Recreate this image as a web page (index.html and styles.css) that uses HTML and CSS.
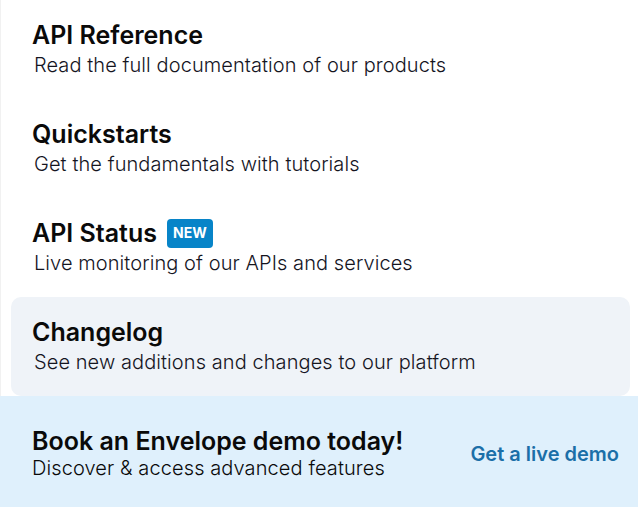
FILE: index.html
```html
<!DOCTYPE html>
<html>
<head>
<meta charset="utf-8">
<link rel="stylesheet" href="styles.css">
</head>
<body>
<div class="menu">
  <ul class="list">
    <li class="item">
      <div class="title">API Reference</div>
      <div class="desc">Read the full documentation of our products</div>
    </li>
    <li class="item">
      <div class="title">Quickstarts</div>
      <div class="desc">Get the fundamentals with tutorials</div>
    </li>
    <li class="item">
      <div class="title">API Status <span class="badge">NEW</span></div>
      <div class="desc">Live monitoring of our APIs and services</div>
    </li>
    <li class="item active">
      <div class="title">Changelog</div>
      <div class="desc">See new additions and changes to our platform</div>
    </li>
  </ul>
  <div class="promo">
    <div class="promo-text">
      <div class="promo-title">Book an Envelope demo today!</div>
      <div class="promo-desc">Discover &amp; access advanced features</div>
    </div>
    <a class="promo-link" href="#">Get a live demo</a>
  </div>
</div>
</body>
</html>
```
FILE: styles.css
```css
html, body {
  margin: 0;
  padding: 0;
  background: #ffffff;
}
body {
  font-family: Inter, "Noto Sans", sans-serif;
  color: #0b0b0f;
}
.menu {
  width: 640px;
  height: 507px;
  border-left: 1px solid #f1f1f1;
  box-sizing: border-box;
  display: flex;
  flex-direction: column;
}
.list {
  list-style: none;
  margin: 0;
  padding: 0 10px 0 10px;
  display: flex;
  flex-direction: column;
}
.item {
  height: 99px;
  box-sizing: border-box;
  padding: 20px 21px 0 21px;
  border-radius: 10px;
}
.item.active {
  background: #eff3f8;
}
.title {
  font-size: 25px;
  font-weight: 600;
  line-height: 30px;
  display: flex;
  align-items: center;
  gap: 10px;
  color: #0a0a0a;
}
.desc {
  font-size: 20px;
  font-weight: 300;
  line-height: 26px;
  margin-top: 2px;
  margin-left: 2px;
  letter-spacing: 0.08px;
  color: #15151f;
}
.badge {
  display: inline-flex;
  align-items: center;
  justify-content: center;
  height: 29px;
  padding: 0 6px;
  border-radius: 4px;
  background: #0784c8;
  color: #ffffff;
  font-size: 14px;
  font-weight: 700;
}
.promo {
  flex: 1;
  margin-left: -1px;
  margin-right: 2px;
  background: #dff0fc;
  display: flex;
  align-items: center;
  justify-content: space-between;
  padding: 5px 19px 0 32px;
}
.promo-title {
  font-size: 25px;
  font-weight: 600;
  line-height: 28px;
  color: #0a0a0a;
}
.promo-desc {
  font-size: 20px;
  font-weight: 300;
  line-height: 26px;
  letter-spacing: 0.1px;
  color: #0a0a0a;
}
.promo-link {
  font-size: 20px;
  font-weight: 600;
  color: #1b6fa8;
  text-decoration: none;
}
```
